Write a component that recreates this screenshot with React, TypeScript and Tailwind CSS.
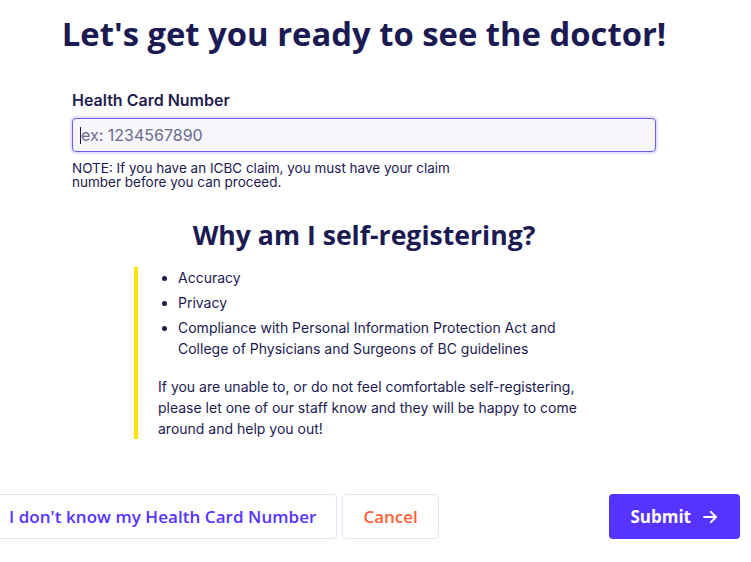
import React from "react";

const heading = { fontFamily: '"Open Sans", "Liberation Sans", sans-serif' };
const body = { fontFamily: 'Inter, "Liberation Sans", sans-serif' };

export default function App() {
  return (
    <div className="w-[751px] h-[562px] overflow-hidden bg-white text-[#1b1a4f]" style={body}>
      <div className="w-[728px] flex flex-col items-center">
        <h1
          className="mt-[14px] text-[32.8px] leading-[40px] font-bold text-[#1b1a52] whitespace-nowrap"
          style={heading}
        >
          Let's get you ready to see the doctor!
        </h1>

        <div className="w-[584px] mt-[36px] flex flex-col">
          <label className="text-[16px] leading-[20px] font-semibold text-[#1f1d4f]">Health Card Number</label>
          <div className="relative mt-[8px]">
            <input
              className="w-full h-[34px] rounded-[4px] border border-[#6a5ff2] bg-[#f7f7fb] px-[8px] text-[16px] text-[#1b1a4f] placeholder:text-[#6b6a8c] outline-none shadow-[0_0_0_2px_rgba(106,95,242,0.18)]"
              placeholder="ex: 1234567890"
              readOnly
            />
            <span className="absolute left-[8px] top-[9px] w-[1px] h-[17px] bg-[#1b1a4f]" />
          </div>
          <p className="mt-[9px] w-[400px] text-[13.5px] leading-[14px] text-[#1b1a4f]">
            NOTE: If you have an ICBC claim, you must have your claim number before you can proceed.
          </p>
        </div>

        <h2
          className="mt-[30px] text-[26.6px] leading-[32px] font-bold text-[#1b1a52] whitespace-nowrap"
          style={heading}
        >
          Why am I self-registering?
        </h2>

        <div className="w-[460px] mt-[16px] border-l-4 border-[#ffe200] pl-[20px] text-[14px] leading-[21px]">
          <ul className="list-disc pl-[20px] flex flex-col gap-[4px]">
            <li>Accuracy</li>
            <li>Privacy</li>
            <li>Compliance with Personal Information Protection Act and College of Physicians and Surgeons of BC guidelines</li>
          </ul>
          <p className="mt-[17px]">
            If you are unable to, or do not feel comfortable self-registering, please let one of our staff know and they will be happy to come around and help you out!
          </p>
        </div>

        <div className="w-[752px] shrink-0 mt-[55px] flex items-center justify-between" style={heading}>
          <div className="flex gap-[5px]">
            <button className="h-[45px] px-[20px] rounded-[4px] border border-[#e6e5f2] bg-white text-[17px] tracking-[0.05px] font-semibold text-[#5533ff] whitespace-nowrap">
              I don't know my Health Card Number
            </button>
            <button className="h-[45px] px-[20px] rounded-[4px] border border-[#e6e5f2] bg-white text-[17px] font-semibold text-[#ff6138]">
              Cancel
            </button>
          </div>
          <button className="h-[45px] px-[21px] rounded-[4px] bg-[#5733ff] text-white text-[17px] font-bold flex items-center gap-[10px]">
            Submit
            <svg width="18" height="18" viewBox="0 0 24 24" fill="none" stroke="currentColor" strokeWidth="2.4" strokeLinecap="round" strokeLinejoin="round">
              <path d="M4 12h16" />
              <path d="M13 5l7 7-7 7" />
            </svg>
          </button>
        </div>
      </div>
    </div>
  );
}
